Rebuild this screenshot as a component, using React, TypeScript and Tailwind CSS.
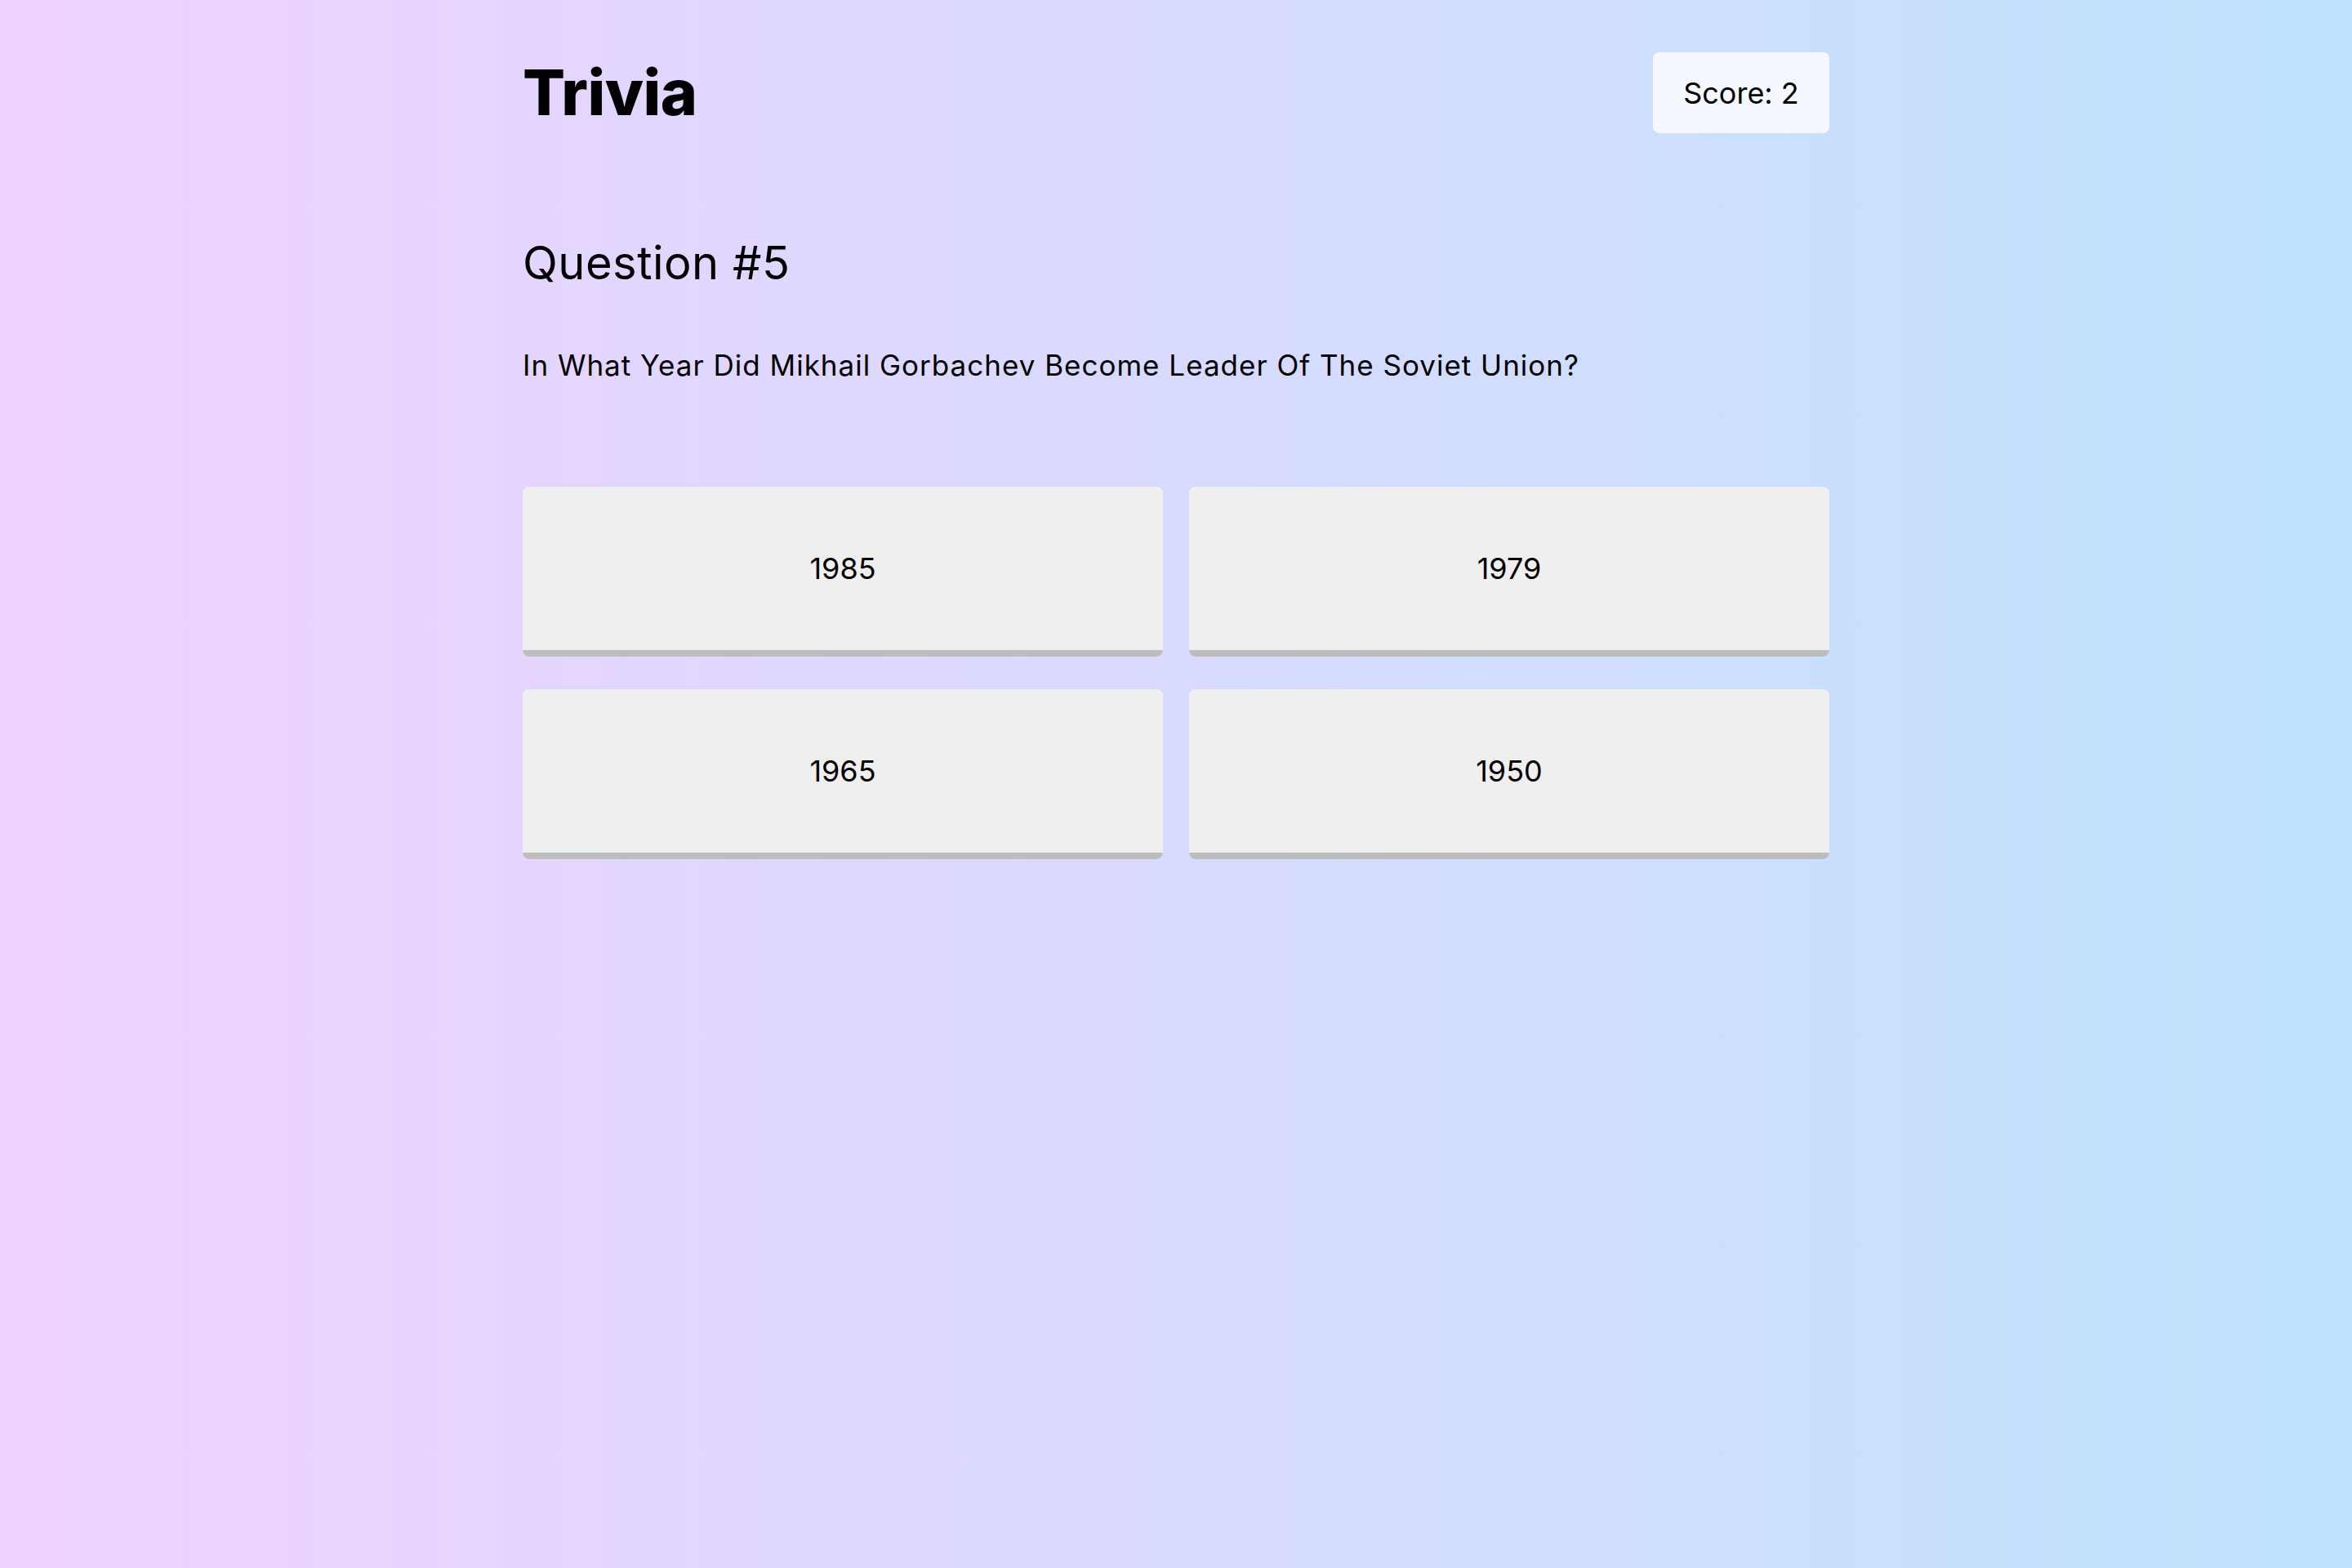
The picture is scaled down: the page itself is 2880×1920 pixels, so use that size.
const answers = ["1985", "1979", "1965", "1950"];

export default function App() {
  return (
    <div className="min-h-screen w-full bg-gradient-to-r from-[#efd1fe] to-[#bee3fe] text-black font-['Inter',sans-serif]">
      <div className="w-[1600px] mx-auto pt-16">
        {/* Header */}
        <header className="flex items-center justify-between h-[99px]">
          <h1 className="text-[77px] leading-none font-extrabold tracking-[-0.5px]">Trivia</h1>
          <div className="w-[216px] h-[99px] rounded-[8px] bg-[#f5f9ff] flex items-center justify-center text-[36px]">
            Score: 2
          </div>
        </header>

        {/* Question */}
        <h2 className="mt-[126px] text-[56px] leading-[1.2] tracking-[0.5px]">Question #5</h2>
        <p className="mt-[70px] text-[35px] leading-[1.2] tracking-[1px]">
          In What Year Did Mikhail Gorbachev Become Leader Of The Soviet Union?
        </p>

        {/* Answers */}
        <div className="mt-[128px] grid grid-cols-2 gap-x-8 gap-y-10">
          {answers.map((a) => (
            <button
              key={a}
              className="h-[208px] rounded-[8px] bg-[#efefef] border-b-8 border-[#bdbdbd] text-[36px] flex items-center justify-center"
            >
              {a}
            </button>
          ))}
        </div>
      </div>
    </div>
  );
}
